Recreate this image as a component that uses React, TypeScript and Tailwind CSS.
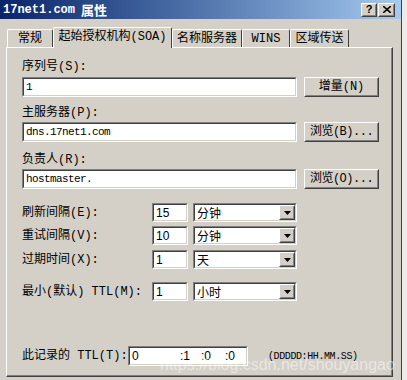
import React from 'react';

const CJK = "font-['Liberation_Mono','Noto_Sans_CJK_SC',monospace]";

const Sunken = ({ className, children }: { className: string; children?: React.ReactNode }) => (
  <div className={`border border-t-[#808080] border-l-[#808080] border-b-white border-r-white ${className}`}>
    <div className="h-full border border-t-[#404040] border-l-[#404040] border-b-[#d4d0c8] border-r-[#d4d0c8] bg-white flex items-center relative">
      {children}
    </div>
  </div>
);

const Raised = ({ className, children }: { className: string; children?: React.ReactNode }) => (
  <div className={`border border-t-white border-l-white border-b-[#404040] border-r-[#404040] bg-[#d4d0c8] ${className}`}>
    <div className="h-full border border-t-[#d4d0c8] border-l-[#d4d0c8] border-b-[#808080] border-r-[#808080] flex items-center justify-center">
      {children}
    </div>
  </div>
);

const Label = ({ text, className = '' }: { text: string; className?: string }) => (
  <div className={`${CJK} text-[12px] leading-[14px] text-black h-[14px] whitespace-nowrap ${className}`}>{text}</div>
);

const Combo = ({ value }: { value: string }) => (
  <Sunken className="w-[104px] h-[19px]">
    <span className="pl-[2px] text-[12px] leading-[14px] font-['Noto_Sans_CJK_SC',sans-serif]">{value}</span>
    <Raised className="ml-auto w-[16px] h-[15px]">
      <svg width="7" height="4" viewBox="0 0 7 4">
        <path d="M0 0h7L3.5 4z" fill="#000" />
      </svg>
    </Raised>
  </Sunken>
);

const IntervalRow = ({ label, num, unit, className }: { label: string; num: string; unit: string; className: string }) => (
  <div className={`flex items-center h-[19px] ${className}`}>
    <Label text={label} className="w-[130px]" />
    <Sunken className="w-[36px] h-[19px]">
      <span className="pl-[2px] text-[12px] font-['Liberation_Sans',sans-serif]">{num}</span>
    </Sunken>
    <div className="w-[5px]" />
    <Combo value={unit} />
  </div>
);

const Tab = ({ text, w, active }: { text: string; w: string; active?: boolean }) => (
  <div
    className={`${w} ${
      active ? 'h-[21px] z-10 -mb-px pb-[3px]' : 'h-[18px]'
    } bg-[#d4d0c8] border-t border-l border-t-white border-l-white border-r border-r-[#404040] rounded-tl-[2px] rounded-tr-[2px] flex items-center justify-center ${CJK} text-[12px] leading-[14px] whitespace-nowrap`}
  >
    {text}
  </div>
);

export default function App() {
  return (
    <div className="w-[407px] h-[380px] bg-[#ecebe8] overflow-hidden">
      <div className="w-[402px] h-[380px] bg-[#d4d0c8] border-r border-r-[#404040] flex flex-col relative">
        {/* title bar */}
        <div className="h-[19px] bg-gradient-to-r from-[#0a246a] to-[#a6caf0] flex items-center pl-[3px] pr-[6px]">
          <span className="text-white font-bold text-[12px] font-['Liberation_Mono',monospace]">17net1.com</span>
          <span className="text-white font-bold text-[13px] ml-[6px] font-['Noto_Sans_CJK_SC',sans-serif] leading-[15px]">属性</span>
          <div className="ml-auto flex gap-px">
            <Raised className="w-[16px] h-[14px]">
              <span className="text-[11px] font-bold leading-none font-['Liberation_Sans',sans-serif]">?</span>
            </Raised>
            <Raised className="w-[17px] h-[14px]">
              <svg width="8" height="7" viewBox="0 0 8 7">
                <path d="M0 0L8 7M8 0L0 7" stroke="#000" strokeWidth="1.6" />
              </svg>
            </Raised>
          </div>
        </div>

        {/* tabs */}
        <div className="h-[28px] flex items-end pl-[7px]">
          <Tab text="常规" w="w-[46px]" />
          <Tab text="起始授权机构(SOA)" w="w-[119px]" active />
          <Tab text="名称服务器" w="w-[70px]" />
          <Tab text="WINS" w="w-[48px]" />
          <Tab text="区域传送" w="w-[59px]" />
        </div>

        {/* panel */}
        <div className="ml-[6px] w-[387px] h-[330px] border-t border-l border-t-white border-l-white border-r border-b border-r-[#404040] border-b-[#404040]">
          <div className="h-full border-r border-b border-r-[#808080] border-b-[#808080] pl-[15px] flex flex-col">
            <Label text="序列号(S):" className="mt-[12px]" />
            <div className="flex mt-[3px]">
              <Sunken className="w-[275px] h-[20px]">
                <span className="pl-[2px] text-[11px] tracking-[-0.6px] font-['Liberation_Mono',monospace]">1</span>
              </Sunken>
              <Raised className="ml-[7px] w-[75px] h-[20px]">
                <span className={`${CJK} text-[12px]`}>增量(N)</span>
              </Raised>
            </div>

            <Label text="主服务器(P):" className="mt-[9px]" />
            <div className="flex mt-[2px]">
              <Sunken className="w-[275px] h-[20px]">
                <span className="pl-[2px] text-[11px] tracking-[-0.6px] font-['Liberation_Mono',monospace]">dns.17net1.com</span>
              </Sunken>
              <Raised className="ml-[7px] w-[75px] h-[20px]">
                <span className={`${CJK} text-[12px] tracking-[-0.5px]`}>浏览(B)...</span>
              </Raised>
            </div>

            <Label text="负责人(R):" className="mt-[11px]" />
            <div className="flex mt-[2px]">
              <Sunken className="w-[275px] h-[20px]">
                <span className="pl-[2px] text-[11px] tracking-[-0.6px] font-['Liberation_Mono',monospace]">hostmaster.</span>
              </Sunken>
              <Raised className="ml-[7px] w-[75px] h-[20px]">
                <span className={`${CJK} text-[12px] tracking-[-0.5px]`}>浏览(O)...</span>
              </Raised>
            </div>

            <IntervalRow label="刷新间隔(E):" num="15" unit="分钟" className="mt-[14px]" />
            <IntervalRow label="重试间隔(V):" num="10" unit="分钟" className="mt-[4px]" />
            <IntervalRow label="过期时间(X):" num="1" unit="天" className="mt-[5px]" />
            <IntervalRow label="最小(默认) TTL(M):" num="1" unit="小时" className="mt-[13px]" />

            <div className="flex items-center mt-[45px] h-[20px]">
              <Label text="此记录的 TTL(T):" className="w-[106px]" />
              <Sunken className="w-[120px] h-[20px]">
                <div className="flex text-[12px] font-['Liberation_Sans',sans-serif] w-full">
                  <span className="pl-[2px] w-[50px]">0</span>
                  <span className="w-[21px]">:1</span>
                  <span className="w-[24px]">:0</span>
                  <span>:0</span>
                </div>
              </Sunken>
              <span className="ml-[20px] text-[10px] font-['Liberation_Mono',monospace] tracking-[-0.4px]">(DDDDD:HH.MM.SS)</span>
            </div>
          </div>
        </div>

        {/* watermark */}
        <div className="absolute left-[160px] top-[353px] text-[16px] text-white/50 font-['Liberation_Sans',sans-serif] pointer-events-none">
          https://blog.csdn.net/shouyangao
        </div>
      </div>
    </div>
  );
}
